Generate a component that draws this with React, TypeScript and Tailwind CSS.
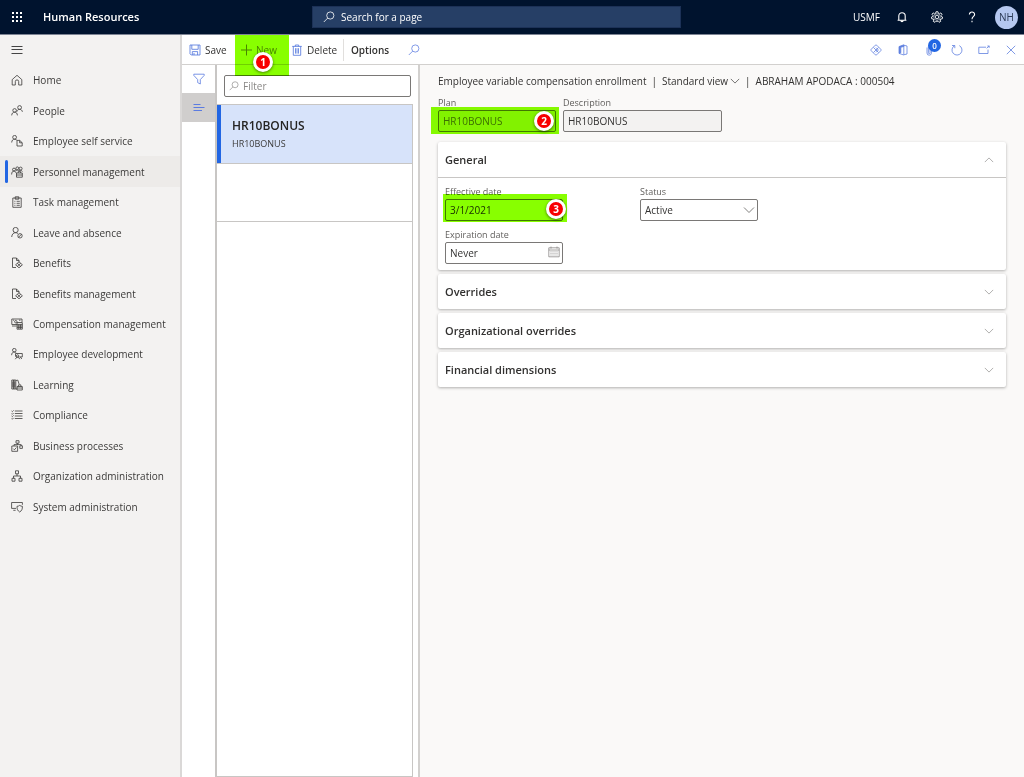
import type { ReactNode } from "react";

type GlyphProps = { children: ReactNode; className?: string; box?: number };

function Glyph({ children, className = "size-3", box = 12 }: GlyphProps) {
  return (
    <svg
      viewBox={`0 0 ${box} ${box}`}
      className={`shrink-0 ${className}`}
      fill="none"
      stroke="currentColor"
      strokeWidth="0.8"
      aria-hidden="true"
    >
      {children}
    </svg>
  );
}

const magnifier = (
  <>
    <circle cx="7.3" cy="4.5" r="3.6" />
    <path d="M4.7 7.1 L0.8 11" />
  </>
);

const chevronDown = <path d="M1 3.5 L6 8.5 L11 3.5" />;
const chevronUp = <path d="M1 8.5 L6 3.5 L11 8.5" />;

const benefits = (
  <>
    <path d="M5 10.5H1.5V1H5.5L8 3.5V5M5.5 1V3.5H8" />
    <path d="M8 4.8L11.4 7.8L8 10.8L4.6 7.8Z" />
    <path d="M6.3 6.3L9.7 9.3M9.7 6.3L6.3 9.3" />
  </>
);

const modules: { label: string; icon: ReactNode; active?: boolean }[] = [
  {
    label: "Home",
    icon: <path d="M1.2 5.6L6 1.3L10.8 5.6V11H7.7V7.6A1.7 1.7 0 0 0 4.3 7.6V11H1.2Z" />,
  },
  {
    label: "People",
    icon: (
      <>
        <circle cx="8.6" cy="2.5" r="1.9" />
        <path d="M5.8 6.8C6 5.1 7.2 4.4 8.6 4.4S11.2 5.2 11.4 6.8" />
        <circle cx="3.6" cy="5.4" r="1.8" />
        <path d="M0.7 10.4C0.8 8.2 2 7.2 3.6 7.2S6.3 8.2 6.4 10.4" />
      </>
    ),
  },
  {
    label: "Employee self service",
    icon: (
      <>
        <circle cx="3.6" cy="2.3" r="1.9" />
        <path d="M0.7 7.5C0.8 5.2 2 4.2 3.6 4.2C4.6 4.2 5.4 4.6 5.9 5.3" />
        <path d="M6 5.4H8.7L11.2 7.7V11H6ZM8.6 5.4V7.8H11.2" />
      </>
    ),
  },
  {
    label: "Personnel management",
    active: true,
    icon: (
      <>
        <circle cx="3" cy="3.6" r="1.5" />
        <path d="M0.6 8.5C0.7 6 1.6 5.1 3 5.1S4.8 6 5 7" />
        <circle cx="6.3" cy="2.3" r="1.4" />
        <circle cx="9.6" cy="2.6" r="1.5" />
        <path d="M5 5C5.6 4 7 3.8 8 4.7C9 3.9 10.6 4 11.3 5.6" />
        <path d="M5.5 7H11.3V11.2H5.5ZM7.2 7V5.6H9.6V7M5.5 9H11.3" />
      </>
    ),
  },
  {
    label: "Task management",
    icon: (
      <>
        <path d="M1.8 2H10.2V11.3H1.8ZM4.2 3.2V0.8H7.8V3.2Z" />
        <path d="M3.4 5.3H4.4M5.6 5.3H8.8M3.4 7.3H4.4M5.6 7.3H8.8M3.4 9.3H4.4M5.6 9.3H8.8" />
      </>
    ),
  },
  {
    label: "Leave and absence",
    icon: (
      <>
        <circle cx="4.6" cy="3" r="2.6" />
        <path d="M0.7 10C0.9 7 2.5 5.7 4.6 5.7C5.6 5.7 6.3 6 6.9 6.5" />
        <circle cx="9" cy="8.8" r="2.2" />
        <path d="M7.4 10.4L10.6 7.2" />
      </>
    ),
  },
  { label: "Benefits", icon: benefits },
  { label: "Benefits management", icon: benefits },
  {
    label: "Compensation management",
    icon: (
      <>
        <path d="M6 6.5H0.8V1H11V4" />
        <circle cx="4.8" cy="3.7" r="1.2" />
        <path d="M2 2.2H3M8 2.2H9.5M1 8H5.5" />
        <path d="M6 4.5H11.3V11.2H6ZM6 6.4H11.3M6 8H11.3M6 9.6H11.3M7.8 6.4V11M9.6 6.4V11" />
      </>
    ),
  },
  {
    label: "Employee development",
    icon: (
      <>
        <circle cx="3.3" cy="2.2" r="1.8" />
        <path d="M0.6 7.2C0.7 5 1.8 4 3.3 4C4.1 4 4.8 4.3 5.3 4.9" />
        <path d="M4.5 5.5H11.3V8.9H8.5M4.5 8.7V5.5" />
        <circle cx="6.6" cy="8" r="1.2" />
        <path d="M4.3 11.2L5.8 9.1H7.4L8.8 11.2M9.3 8.9L10.8 11" />
      </>
    ),
  },
  {
    label: "Learning",
    icon: (
      <>
        <path d="M0.8 1H2.8V10H0.8ZM2.8 1H4.8V10H2.8ZM5 1.5L6.8 1.1L8.2 5.4" />
        <path d="M4.8 10H6M1.8 2.5V8.5M3.8 2.5V8.5" />
        <path d="M6 7.5H11.3V11H6ZM7.4 7.5V5.9H9.9V7.5M6 9H11.3" />
      </>
    ),
  },
  {
    label: "Compliance",
    icon: (
      <path d="M0.6 2L1.3 2.7L2.6 1.4M0.6 4.6L1.3 5.3L2.6 4M0.6 7L1.3 7.7L2.6 6.4M0.6 9.5L1.3 10.2L2.6 8.9M3.8 2H11.5M3.8 4.5H11.5M3.8 7H11.5M3.8 9.5H11.5" />
    ),
  },
  {
    label: "Business processes",
    icon: (
      <>
        <path d="M5 0.7H8V3.2H5ZM6.5 3.2V4.6M3 6V4.6H10.2V6" />
        <path d="M0.8 6H6.6V11.3H0.8Z" />
        <path d="M2.2 8.6L3.4 9.8L5.4 7.5" />
        <path d="M8.8 5.8H11.4V8.4H8.8Z" />
      </>
    ),
  },
  {
    label: "Organization administration",
    icon: (
      <>
        <path d="M4.5 0.8H7.5V3.8H4.5ZM6 3.8V6M2.5 8.3V6H9.5V8.3" />
        <path d="M1 8.3H4V11.2H1ZM8 8.3H11V11.2H8Z" />
      </>
    ),
  },
  {
    label: "System administration",
    icon: (
      <>
        <path d="M5 7.4H0.6V1.5H11.4V3.8M2.3 9.3H4.6" />
        <path d="M8.7 4.4C9.5 5 10.4 5.3 11.4 5.3C11.5 8 10.8 9.8 8.7 11C6.6 9.8 5.9 8 6 5.3C7 5.3 7.9 5 8.7 4.4Z" />
      </>
    ),
  },
];

function Callout({ n, area, spot }: { n: number; area: string; spot: string }) {
  return (
    <>
      <span className={`pointer-events-none absolute bg-[#88ff00] mix-blend-multiply ${area}`} />
      <span
        className={`pointer-events-none absolute flex size-5 items-center justify-center rounded-full border-[3px] border-white bg-[#f80000] text-[10px] leading-none font-bold text-white shadow-[0_1px_3px_rgba(0,0,0,0.5)] ${spot}`}
      >
        {n}
      </span>
    </>
  );
}

function TopBar() {
  return (
    <header className="flex h-[35px] shrink-0 items-center border-b border-[#7d8494] bg-[#00132e] text-white">
      <div className="flex w-[312px] shrink-0 items-center gap-5 pl-[11px]">
        <button aria-label="App launcher" className="flex size-3 items-center">
          <svg viewBox="0 0 12 12" className="size-3" fill="currentColor" aria-hidden="true">
            {[1, 5, 9].map((y) => [1, 5, 9].map((x) => <rect key={`${x}-${y}`} x={x} y={y} width="2" height="2" />))}
          </svg>
        </button>
        <h1 className="text-[11px] font-semibold">Human Resources</h1>
      </div>
      <label className="flex h-[22px] w-[36%] items-center gap-1.5 border border-[#1c3157] bg-[#263f66] pl-2.5">
        <Glyph className="size-3">{magnifier}</Glyph>
        <input
          aria-label="Search for a page"
          placeholder="Search for a page"
          className="min-w-0 flex-1 bg-transparent outline-none placeholder:text-white"
        />
      </label>
      <div className="ml-auto flex items-center">
        <button className="mr-1">USMF</button>
        <button aria-label="Notifications" className="flex w-[35px] justify-center">
          <Glyph>
            <path strokeWidth="1.1" d="M1.6 9.3H10.4M2.8 9.2V5A3.2 3.2 0 0 1 9.2 5V9.2M4.9 9.5A1.1 1.1 0 0 0 7.1 9.5" />
          </Glyph>
        </button>
        <button aria-label="Settings" className="flex w-[35px] justify-center">
          <Glyph className="size-3" box={24}>
            <g strokeWidth="1.8">
              <circle cx="12" cy="12" r="3.6" />
              <path
                strokeLinejoin="round"
                d="M10 1.5H14L14.6 4.6L17 5.6L19.6 3.8L22 6.6L20 9.2L20.4 11L23 12L22.4 15.8L19.4 16L18.2 18L19.4 20.8L16 22.6L14 20.4H10L8 22.6L4.6 20.8L5.8 18L4.6 16L1.6 15.8L1 12L3.6 11L4 9.2L2 6.6L4.4 3.8L7 5.6L9.4 4.6Z"
              />
              <circle cx="12" cy="12" r="6.6" strokeWidth="1" />
            </g>
          </Glyph>
        </button>
        <button aria-label="Help" className="flex w-[35px] justify-center">
          <Glyph>
            <path strokeWidth="1.1" d="M3.4 3.6A2.6 2.6 0 1 1 8.6 3.5C8.6 5.4 6 5.5 6 8.2M6 9.8V11.2" />
          </Glyph>
        </button>
        <button aria-label="Account" className="flex w-[35px] justify-center">
          <span className="flex size-[23px] items-center justify-center rounded-full bg-[#b5c8f0] text-[#2b3a55]">
            NH
          </span>
        </button>
      </div>
    </header>
  );
}

function Sidebar() {
  return (
    <aside className="w-[182px] shrink-0 border-r-2 border-[#dad8d7] bg-[#f3f2f1]">
      <button aria-label="Toggle navigation" className="flex h-[30px] items-center pl-[11px] text-[#444]">
        <Glyph>
          <path strokeWidth="1" d="M0.5 2.5H11.5M0.5 5.5H11.5M0.5 9.5H11.5" />
        </Glyph>
      </button>
      <nav className="flex h-[457px] flex-col">
        {modules.map((m) => (
          <a
            key={m.label}
            href="#"
            className={`relative flex flex-1 items-center gap-2.5 pl-[11px] text-[#3b3a39] ${m.active ? "bg-[#edebe9]" : ""}`}
          >
            {m.active && <span className="absolute inset-y-1 left-[5px] w-[3px] rounded-sm bg-[#2266e3]" />}
            <Glyph className="size-3">{m.icon}</Glyph>
            <span className="whitespace-nowrap">{m.label}</span>
          </a>
        ))}
      </nav>
    </aside>
  );
}

const pageTools: { label: string; icon: ReactNode }[] = [
  {
    label: "Power Apps",
    icon: (
      <path d="M5.3 1.2Q6 0.5 6.7 1.2L10.8 5.3Q11.5 6 10.8 6.7L6.7 10.8Q6 11.5 5.3 10.8L1.2 6.7Q0.5 6 1.2 5.3ZM3.5 3.5L8.5 8.5M8.5 3.5L3.5 8.5M6 3.6L8.4 6L6 8.4" />
    ),
  },
  {
    label: "Open in Microsoft Office",
    icon: (
      <>
        <path d="M6.8 1.2L10 2V10L6.8 10.8Z" />
        <path fill="currentColor" d="M6.8 0.8L2 2.6V9.4L3.8 8.8V3.3L6.8 2.4Z" />
        <path d="M2 9.4L6.8 11" />
      </>
    ),
  },
  {
    label: "Attachments",
    icon: <path d="M3 3.5V9A2.2 2.2 0 0 0 7.4 9V2.5A1.5 1.5 0 0 0 4.4 2.5V8.8A0.8 0.8 0 0 0 6 8.8V4" />,
  },
  { label: "Refresh", icon: <path d="M8.3 1.6A5 5 0 1 1 3.5 1.7M3.8 4.2V1.5H1" /> },
  { label: "Open in new window", icon: <path d="M8 3.2H0.8V9.5H10V5.6M8.6 4.3L11.2 2M9.4 2H11.2V3.8" /> },
  { label: "Close", icon: <path d="M1.8 1.8L10.2 10.2M10.2 1.8L1.8 10.2" /> },
];

function ActionBar() {
  return (
    <div className="flex h-[30px] shrink-0 items-center border-b border-[#d2d0ce] bg-white text-[#323130]">
      <button className="flex h-full w-[53px] items-center gap-1 pl-[7px]">
        <Glyph className="size-3 text-[#4f74dc]">
          <path d="M1 1H11V11H2.2L1 9.8ZM2.8 1V5.3H9.2V1M3.3 11V7.6H8.6V11M5 11V9" />
        </Glyph>
        Save
      </button>
      <button className="relative flex h-full w-[54px] items-center gap-1 pl-[5px] text-[#858585]">
        <Glyph className="size-3">
          <path strokeWidth="1" d="M6.5 0.5V11.5M1 6H12" />
        </Glyph>
        New
        <Callout n={1} area="inset-x-0 top-0 h-[41px]" spot="left-[18px] top-[17px]" />
      </button>
      <button className="flex h-full w-[54px] items-center gap-1 pl-0.5">
        <Glyph className="size-3 text-[#4f74dc]">
          <path d="M1.2 2.4H10.8M4.3 2.4V1H7.7V2.4M2.3 2.4V11.3H9.7V2.4M4.5 4.2V9.6M6 4.2V9.6M7.5 4.2V9.6" />
        </Glyph>
        Delete
      </button>
      <span className="h-[22px] w-px bg-[#e1dfdd]" />
      <button className="h-full pl-[7px] pr-[19px] font-semibold">Options</button>
      <button aria-label="Search actions" className="flex h-full items-center text-[#6583e2]">
        <Glyph>{magnifier}</Glyph>
      </button>
      <div className="ml-auto flex h-full items-center text-[#5f80df]">
        {pageTools.map((t) => (
          <button key={t.label} aria-label={t.label} className="relative flex h-full w-[27px] items-center justify-center">
            <Glyph>{t.icon}</Glyph>
            {t.label === "Attachments" && (
              <span className="absolute left-3 top-1 flex size-[13px] items-center justify-center rounded-full bg-[#2266e3] text-[8px] leading-none font-semibold text-white">
                0
              </span>
            )}
          </button>
        ))}
      </div>
    </div>
  );
}

function RecordList() {
  return (
    <>
      <div className="flex w-[35px] shrink-0 flex-col border-r-2 border-[#c8c6c4] bg-white text-[#5b7be0]">
        <button aria-label="Show filters" className="flex h-7 items-center justify-center">
          <Glyph>
            <path d="M0.8 1.2H11.2V2.4L7.3 6.6V11L4.7 9.6V6.6L0.8 2.4Z" />
          </Glyph>
        </button>
        <button aria-label="Show list" className="flex h-[29px] items-center justify-center bg-[#d0cecd]">
          <Glyph>
            <path strokeWidth="1" d="M0.5 2.5H7.5M0.5 5.5H11.5M0.5 8.5H9" />
          </Glyph>
        </button>
      </div>
      <section className="flex w-[203px] shrink-0 flex-col border-r-2 border-[#d2d0ce] bg-white">
        <label className="mx-[7px] mt-2.5 mb-[7px] flex h-[22px] items-center gap-1 rounded-xs border border-[#7a7876] pl-1 text-[#8a8886]">
          <Glyph className="size-2.5">{magnifier}</Glyph>
          <input
            aria-label="Filter"
            placeholder="Filter"
            className="min-w-0 flex-1 bg-transparent outline-none placeholder:text-[#8a8886]"
          />
        </label>
        <ul className="mr-[5px] flex-1 border-y border-r border-[#c8c6c4]">
          <li className="h-[59px] border-b border-[#c8c6c4]">
            <a href="#" className="flex h-full flex-col justify-center gap-1 border-l-4 border-[#2266e3] bg-[#d7e3fa] pl-[11px]">
              <span className="text-xs leading-4 font-semibold text-[#252423]">HR10BONUS</span>
              <span className="text-[9px] leading-3 text-[#3b3a39]">HR10BONUS</span>
            </a>
          </li>
          <li className="h-[58px] border-b border-[#c8c6c4]" />
        </ul>
      </section>
    </>
  );
}

function Field({ id, label, children }: { id: string; label: string; children: ReactNode }) {
  return (
    <div className="relative flex w-fit flex-col gap-px">
      <label htmlFor={id} className="text-[9px] leading-3 text-[#605e5c]">
        {label}
      </label>
      {children}
    </div>
  );
}

function Section({ title, open = false, children }: { title: string; open?: boolean; children?: ReactNode }) {
  return (
    <section className="rounded-xs bg-white shadow-[0_1px_3px_rgba(0,0,0,0.3)]">
      <h2>
        <button
          aria-expanded={open}
          className={`flex w-full items-center justify-between pl-[7px] pr-3 text-[11px] font-semibold text-[#323130] ${open ? "h-9 border-b border-[#c8c6c4]" : "h-[35px]"}`}
        >
          {title}
          <Glyph className="size-2.5 text-[#8a8886]">{open ? chevronUp : chevronDown}</Glyph>
        </button>
      </h2>
      {children}
    </section>
  );
}

function Detail() {
  return (
    <main className="min-w-0 flex-1 bg-[#faf9f8] px-[18px] pt-[9px] text-[#323130]">
      <div className="flex h-3.5 items-center gap-[5px] whitespace-nowrap">
        <span>Employee variable compensation enrollment</span>
        <span>|</span>
        <button className="flex items-center gap-0.5">
          Standard view
          <Glyph className="size-2.5">{chevronDown}</Glyph>
        </button>
        <span>|</span>
        <span>ABRAHAM APODACA : 000504</span>
      </div>

      <div className="mt-[9px] flex gap-[7px]">
        <Field id="plan" label="Plan">
          <input
            id="plan"
            defaultValue="HR10BONUS"
            className="h-[22px] w-[118px] rounded-xs border border-[#7a7876] bg-[#f3f2f1] px-1 text-[#707070]"
          />
          <Callout n={2} area="-left-[7px] top-[10px] h-[27px] w-[128px]" spot="left-[96px] top-[14px]" />
        </Field>
        <Field id="description" label="Description">
          <input
            id="description"
            readOnly
            defaultValue="HR10BONUS"
            className="h-[22px] w-[159px] rounded-xs border border-[#7a7876] bg-[#f3f2f1] px-1"
          />
        </Field>
      </div>

      <div className="mt-2.5 flex flex-col gap-1">
        <Section title="General" open>
          <div className="grid grid-cols-[195px_1fr] gap-y-2 px-[7px] pt-2 pb-1.5">
            <Field id="effective" label="Effective date">
              <input
                id="effective"
                defaultValue="3/1/2021"
                className="h-[22px] w-[118px] rounded-xs border border-[#7a7876] bg-white px-1"
              />
              <Callout n={3} area="-left-[2px] top-[8px] h-[28px] w-[124px]" spot="left-[101px] top-[13px]" />
            </Field>
            <Field id="status" label="Status">
              <div className="relative">
                <select
                  id="status"
                  className="h-[22px] w-[118px] appearance-none rounded-xs border border-[#7a7876] bg-white px-1"
                >
                  <option>Active</option>
                </select>
                <Glyph className="pointer-events-none absolute right-[3px] top-[5px] size-3 text-[#605e5c]">
                  {chevronDown}
                </Glyph>
              </div>
            </Field>
            <Field id="expiration" label="Expiration date">
              <div className="relative">
                <input
                  id="expiration"
                  defaultValue="Never"
                  className="h-[22px] w-[118px] rounded-xs border border-[#7a7876] bg-white px-1"
                />
                <Glyph className="absolute right-[3px] top-1 size-3 text-[#8a8886]">
                  <path d="M0.8 1.8H11.2V10.8H0.8ZM0.8 4H11.2M3 0.6V2.6M9 0.6V2.6" />
                  <path strokeDasharray="1 1" d="M2.5 5.8H10M2.5 7.4H10M2.5 9H10" />
                </Glyph>
              </div>
            </Field>
          </div>
        </Section>
        <Section title="Overrides" />
        <Section title="Organizational overrides" />
        <Section title="Financial dimensions" />
      </div>
    </main>
  );
}

export default function App() {
  return (
    <div className="flex min-h-screen flex-col bg-white font-['Open_Sans','Noto_Sans',sans-serif] text-[10px] leading-[14px]">
      <TopBar />
      <div className="flex flex-1">
        <Sidebar />
        <div className="flex min-w-0 flex-1 flex-col">
          <ActionBar />
          <div className="flex flex-1">
            <RecordList />
            <Detail />
          </div>
        </div>
      </div>
    </div>
  );
}
